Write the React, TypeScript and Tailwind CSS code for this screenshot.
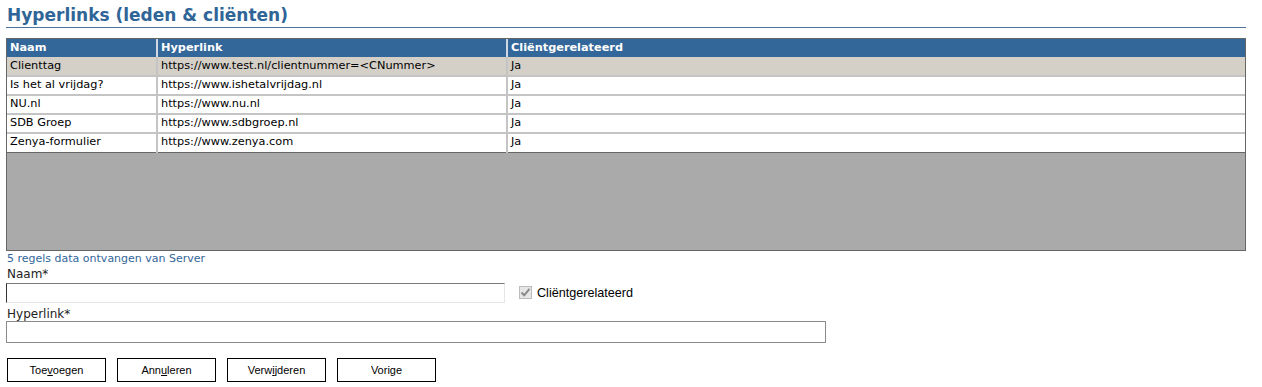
import React from "react";

const rows = [
  { naam: "Clienttag", link: "https://www.test.nl/clientnummer=<CNummer>", rel: "Ja" },
  { naam: "Is het al vrijdag?", link: "https://www.ishetalvrijdag.nl", rel: "Ja" },
  { naam: "NU.nl", link: "https://www.nu.nl", rel: "Ja" },
  { naam: "SDB Groep", link: "https://www.sdbgroep.nl", rel: "Ja" },
  { naam: "Zenya-formulier", link: "https://www.zenya.com", rel: "Ja" },
];

const verdana = "font-['Verdana','DejaVu_Sans',sans-serif]";

const Btn = ({ pre, u, post }: { pre: string; u: string; post: string }) => (
  <button className="w-[99px] h-[24px] border border-black bg-white text-[11px] text-black font-['Liberation_Sans',Arial,sans-serif]">
    {pre}
    <span className="underline">{u}</span>
    {post}
  </button>
);

export default function App() {
  return (
    <div className={`w-[1262px] h-[387px] bg-white pl-[6px] pr-[16px] pt-[5px] ${verdana}`}>
      {/* Title */}
      <h1 className="text-[17px] leading-[20px] font-bold text-[#2f6597] pl-[1px]">
        Hyperlinks (leden &amp; cliënten)
      </h1>
      <div className="h-px bg-[#4f7099] mt-[2px] mb-[10px]" />

      {/* Grid */}
      <div className="border border-[#666] bg-[#aaaaaa] h-[213px]">
        <table className="w-full border-collapse text-[11.3px] bg-white border-b border-[#666]">
          <thead>
            <tr className="bg-[#336699] text-white font-bold h-[18px]">
              <th className="w-[150px] text-left font-bold px-[3px] border-r-2 border-[#cfd8e2]">Naam</th>
              <th className="w-[350px] text-left font-bold px-[3px] border-r-2 border-[#cfd8e2]">Hyperlink</th>
              <th className="text-left font-bold px-[3px]">Cliëntgerelateerd</th>
            </tr>
          </thead>
          <tbody>
            {rows.map((r, i) => (
              <tr
                key={r.naam}
                className={`h-[19px] text-black ${i === 0 ? "bg-[#d4d0c8]" : "bg-white"} ${
                  i < rows.length - 1 ? "border-b-2 border-[#c4c4c4]" : ""
                }`}
              >
                <td className="px-[3px] border-r-2 border-[#c4c4c4]">{r.naam}</td>
                <td className="px-[3px] border-r-2 border-[#c4c4c4]">{r.link}</td>
                <td className="px-[3px]">{r.rel}</td>
              </tr>
            ))}
          </tbody>
        </table>
      </div>

      {/* Status */}
      <div className="text-[11px] leading-[14px] text-[#336699] pl-[1px] mt-[1px]">
        5 regels data ontvangen van Server
      </div>

      {/* Form */}
      <div className="text-[12px] leading-[14px] text-[#222] pl-[1px] mt-[1px]">Naam*</div>
      <div className="flex items-center mt-[2px]">
        <input
          className="w-[499px] h-[20px] bg-white border border-t-[#7a7a7a] border-l-[#333] border-r-[#e6e6e6] border-b-[#e6e6e6] outline-none"
          defaultValue=""
        />
        <label className="flex items-center ml-[14px] gap-[5px] text-[12.6px] text-black font-['Liberation_Sans',Arial,sans-serif]">
          <span className="w-[13px] h-[13px] bg-[#e6e6e6] border border-[#bcbcbc] flex items-center justify-center">
            <svg width="11" height="11" viewBox="0 0 11 11">
              <path d="M1.5 5.5 L4.2 8.3 L9.5 1.8" fill="none" stroke="#8a8a8a" strokeWidth="2" />
            </svg>
          </span>
          Cliëntgerelateerd
        </label>
      </div>

      <div className="text-[12px] leading-[14px] text-[#222] pl-[1px] mt-[4px]">Hyperlink*</div>
      <input
        className="block w-[820px] h-[22px] mt-[0px] bg-white border border-[#8a8a8a] outline-none"
        defaultValue=""
      />

      {/* Buttons */}
      <div className="flex gap-[11px] mt-[15px] ml-[1px]">
        <Btn pre="Toe" u="v" post="oegen" />
        <Btn pre="Ann" u="u" post="leren" />
        <Btn pre="Verw" u="i" post="jderen" />
        <Btn pre="Vorige" u="" post="" />
      </div>
    </div>
  );
}
